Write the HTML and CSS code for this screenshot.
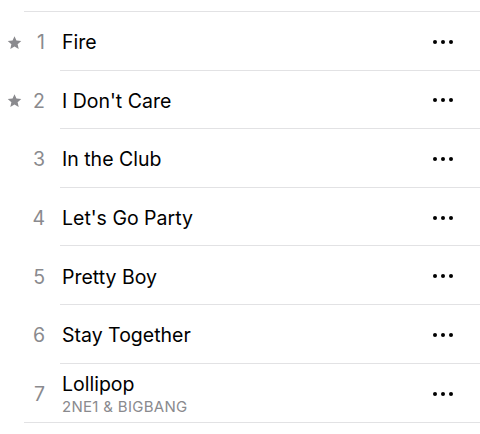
FILE: index.html
```html
<!DOCTYPE html>
<html lang="en">
<head>
<meta charset="UTF-8">
<meta name="viewport" content="width=device-width, initial-scale=1.0">
<title>Tracks</title>
<link rel="stylesheet" href="styles.css">
</head>
<body>

<div class="tracklist">
  <div class="top-rule"></div>

  <div class="track">
    <div class="star"><svg viewBox="0 0 24 24"><path d="M12 1.8l3.1 7.1 7.7.7-5.8 5.1 1.7 7.6L12 18.3l-6.7 4 1.7-7.6-5.8-5.1 7.7-.7z"/></svg></div>
    <div class="num">1</div>
    <div class="body">
      <div class="info"><div class="title">Fire</div></div>
      <div class="more"><span></span><span></span><span></span></div>
    </div>
  </div>

  <div class="track">
    <div class="star"><svg viewBox="0 0 24 24"><path d="M12 1.8l3.1 7.1 7.7.7-5.8 5.1 1.7 7.6L12 18.3l-6.7 4 1.7-7.6-5.8-5.1 7.7-.7z"/></svg></div>
    <div class="num">2</div>
    <div class="body">
      <div class="info"><div class="title">I Don't Care</div></div>
      <div class="more"><span></span><span></span><span></span></div>
    </div>
  </div>

  <div class="track">
    <div class="star"></div>
    <div class="num">3</div>
    <div class="body">
      <div class="info"><div class="title">In the Club</div></div>
      <div class="more"><span></span><span></span><span></span></div>
    </div>
  </div>

  <div class="track">
    <div class="star"></div>
    <div class="num">4</div>
    <div class="body">
      <div class="info"><div class="title">Let's Go Party</div></div>
      <div class="more"><span></span><span></span><span></span></div>
    </div>
  </div>

  <div class="track">
    <div class="star"></div>
    <div class="num">5</div>
    <div class="body">
      <div class="info"><div class="title">Pretty Boy</div></div>
      <div class="more"><span></span><span></span><span></span></div>
    </div>
  </div>

  <div class="track">
    <div class="star"></div>
    <div class="num">6</div>
    <div class="body">
      <div class="info"><div class="title">Stay Together</div></div>
      <div class="more"><span></span><span></span><span></span></div>
    </div>
  </div>

  <div class="track last">
    <div class="star"></div>
    <div class="num">7</div>
    <div class="body">
      <div class="info">
        <div class="title">Lollipop</div>
        <div class="artist">2NE1 &amp; BIGBANG</div>
      </div>
      <div class="more"><span></span><span></span><span></span></div>
    </div>
  </div>
</div>

</body>
</html>
```

FILE: styles.css
```css
body {
  margin: 0;
  background: #fff;
  font-family: Inter, "Liberation Sans", Arial, sans-serif;
  color: #000;
}
.tracklist {
  width: 480px;
}
.top-rule {
  height: 11px;
  margin-left: 24px;
  border-bottom: 1px solid #e2e2e4;
}
.track {
  display: flex;
  align-items: stretch;
  height: 58.6px;
}
.track.last {
  border-bottom: 1px solid #e2e2e4;
  margin-left: 24px;
}
.track.last .star {
  width: 0;
}
.star {
  width: 24px;
  display: flex;
  align-items: center;
  justify-content: flex-end;
  padding-top: 2px;
}
.star svg {
  width: 15px;
  height: 15px;
  fill: #8a8a8e;
  margin-right: 2px;
}
.num {
  width: 21px;
  display: flex;
  align-items: center;
  justify-content: flex-end;
  font-size: 19.5px;
  color: #8a8a8e;
  padding-top: 2px;
}
.body {
  flex: 1;
  margin-left: 15px;
  display: flex;
  align-items: center;
  border-bottom: 1px solid #e2e2e4;
  padding-right: 27px;
}
.track.last .body {
  border-bottom: none;
}
.info {
  flex: 1;
  padding-left: 2px;
  padding-top: 3px;
}
.title {
  font-size: 19.5px;
  line-height: 24px;
}
.artist {
  font-size: 15px;
  letter-spacing: 0.3px;
  line-height: 18px;
  color: #8a8a8e;
  margin-top: 2px;
}
.more {
  display: flex;
  gap: 4px;
  padding-top: 2px;
}
.more span {
  width: 4px;
  height: 4px;
  border-radius: 50%;
  background: #000;
}
```
